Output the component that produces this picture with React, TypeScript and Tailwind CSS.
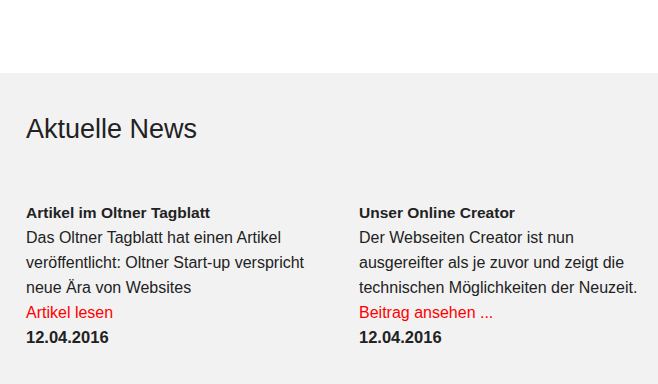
import React from 'react';

interface NewsItem {
  title: string;
  text: string;
  link: string;
  date: string;
}

const news: NewsItem[] = [
  {
    title: 'Artikel im Oltner Tagblatt',
    text: 'Das Oltner Tagblatt hat einen Artikel veröffentlicht: Oltner Start-up verspricht neue Ära von Websites',
    link: 'Artikel lesen',
    date: '12.04.2016',
  },
  {
    title: 'Unser Online Creator',
    text: 'Der Webseiten Creator ist nun ausgereifter als je zuvor und zeigt die technischen Möglichkeiten der Neuzeit.',
    link: 'Beitrag ansehen ...',
    date: '12.04.2016',
  },
];

const App: React.FC = () => {
  return (
    <div className="w-[658px] h-[384px] overflow-hidden bg-white font-['Liberation_Sans',Arial,sans-serif] text-[#222]">
      <div className="h-[73px] bg-white" />
      <section className="bg-[#f2f2f2] h-[311px] pl-[26px] pr-[6px] pt-[40px]">
        <h2 className="text-[27px] leading-[32px] font-normal text-[#222]">Aktuelle News</h2>

        <div className="grid grid-cols-[293px_293px] gap-x-[40px] mt-[55px]">
          {news.map((item) => (
            <div key={item.title} className="text-[16px] leading-[25px]">
              <h3 className="font-bold text-[15.5px]">{item.title}</h3>
              <p>{item.text}</p>
              <a href="#" className="block text-[#ff0000]">
                {item.link}
              </a>
              <p className="font-bold text-[16.5px]">{item.date}</p>
            </div>
          ))}
        </div>
      </section>
    </div>
  );
};

export default App;
